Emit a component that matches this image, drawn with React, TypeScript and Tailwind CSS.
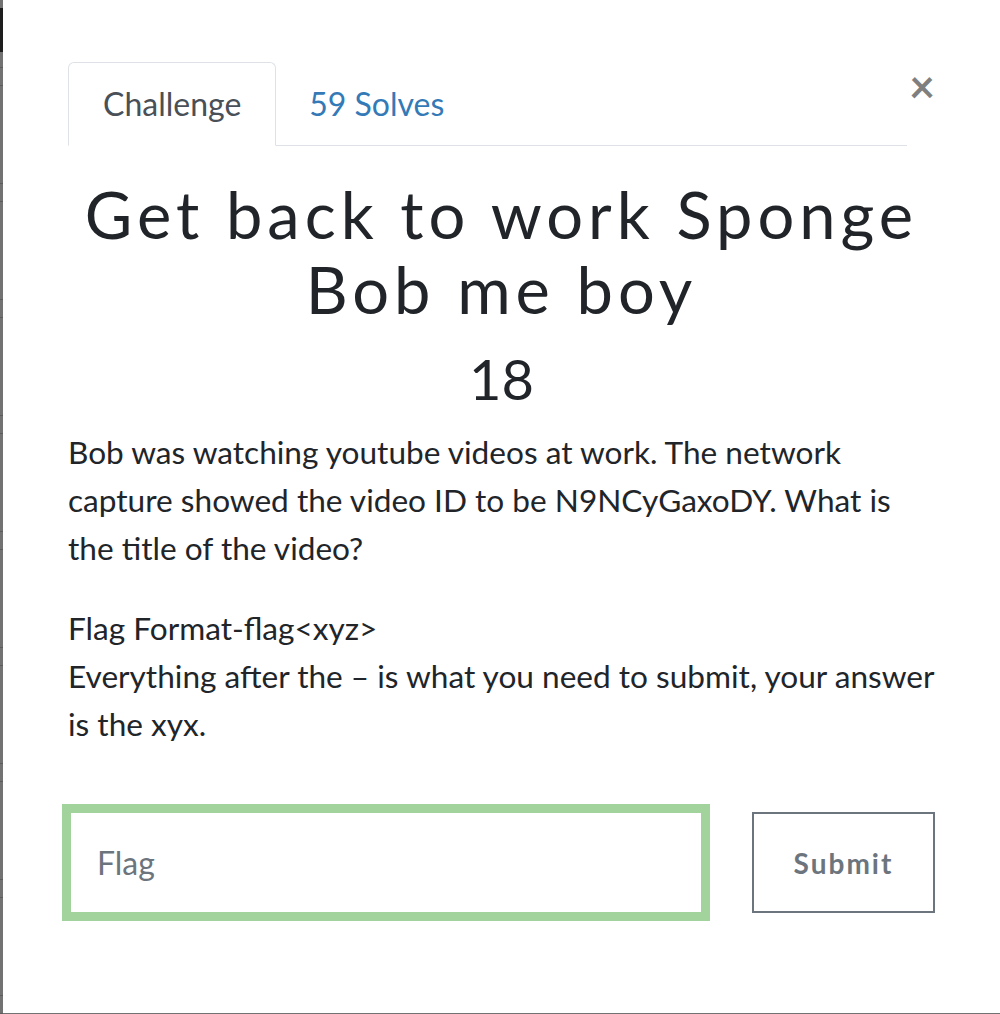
import { useState } from 'react'

const SANS = 'font-["Lato","Liberation_Sans",sans-serif]'

// thin slice of the page behind the modal, visible on the left edge
function BackdropEdge() {
  return (
    <div className="flex w-[3px] shrink-0 flex-col bg-[#727272]">
      <div className="h-[8px]" />
      <div className="h-[44px] bg-[#1e1e1e]" />
      <div className="h-[15px]" />
      {Array.from({ length: 9 }).map((_, i) => (
        <div key={i} className="flex flex-col">
          <div className="h-px bg-[#5c5c5c]" />
          <div className="h-[17px]" />
          <div className="h-px bg-[#5c5c5c]" />
          <div className="h-[97px]" />
        </div>
      ))}
    </div>
  )
}

export default function App() {
  const [tab, setTab] = useState<'challenge' | 'solves'>('challenge')
  const [flag, setFlag] = useState('')

  return (
    <div className={`flex h-[1014px] w-[1000px] items-start overflow-hidden bg-[#727272] ${SANS}`}>
      <BackdropEdge />

      <div className="flex h-[1013px] flex-1 flex-col bg-white px-[65px] pt-[62px] text-[#212529]">
        {/* Tabs + close */}
        <div className="flex items-start">
          <nav className="flex flex-1 border-b border-[#dee2e6]">
            <button
              onClick={() => setTab('challenge')}
              className={
                tab === 'challenge'
                  ? '-mb-px flex h-[84px] items-center rounded-t-[6px] border border-[#dee2e6] border-b-white bg-white px-[34px] text-[32px] text-[#495057]'
                  : '-mb-px flex h-[84px] items-center rounded-t-[6px] border border-transparent px-[34px] text-[32px] text-[#337ab7]'
              }
            >
              Challenge
            </button>
            <button
              onClick={() => setTab('solves')}
              className={
                tab === 'solves'
                  ? '-mb-px flex h-[84px] items-center rounded-t-[6px] border border-[#dee2e6] border-b-white bg-white px-[32px] text-[32px] text-[#495057]'
                  : '-mb-px flex h-[84px] items-center rounded-t-[6px] border border-transparent px-[32px] text-[32px] text-[#337ab7]'
              }
            >
              59 Solves
            </button>
          </nav>
          <button className="-mt-px flex h-[50px] w-[28px] items-center justify-end text-[45px] font-bold leading-none text-black/50">
            ×
          </button>
        </div>

        {/* Title */}
        <h1 className="mt-[31px] text-center text-[65px] font-normal leading-[75px] tracking-[5px]">
          Get back to work Sponge Bob me boy
        </h1>
        <h3 className="mt-[18px] text-center text-[56px] leading-[67px]">18</h3>

        {/* Description */}
        <div className="mt-[16px] text-[31.6px] leading-[48px]">
          <p className="mb-[32px]">
            Bob was watching youtube videos at work. The network capture showed the video ID to be
            N9NCyGaxoDY. What is the title of the video?
          </p>
          <p>
            Flag Format-flag&lt;xyz&gt;
            <br />
            Everything after the – is what you need to submit, your answer is the xyx.
          </p>
        </div>

        {/* Flag form */}
        <form className="mt-[62px] flex items-start" onSubmit={e => e.preventDefault()}>
          <input
            value={flag}
            onChange={e => setFlag(e.target.value)}
            placeholder="Flag"
            className="h-[105px] w-[636px] border-[3px] border-[#a3d39c] pl-[26px] text-[32px] text-[#495057] shadow-[0_0_0_6px_#a3d39c] outline-none placeholder:text-[#6c757d]"
          />
          <button
            type="submit"
            className="ml-auto mt-[2px] h-[101px] w-[183px] border-2 border-[#6c757d] text-[28px] font-bold tracking-[2px] text-[#6c757d]"
          >
            Submit
          </button>
        </form>
      </div>
    </div>
  )
}
